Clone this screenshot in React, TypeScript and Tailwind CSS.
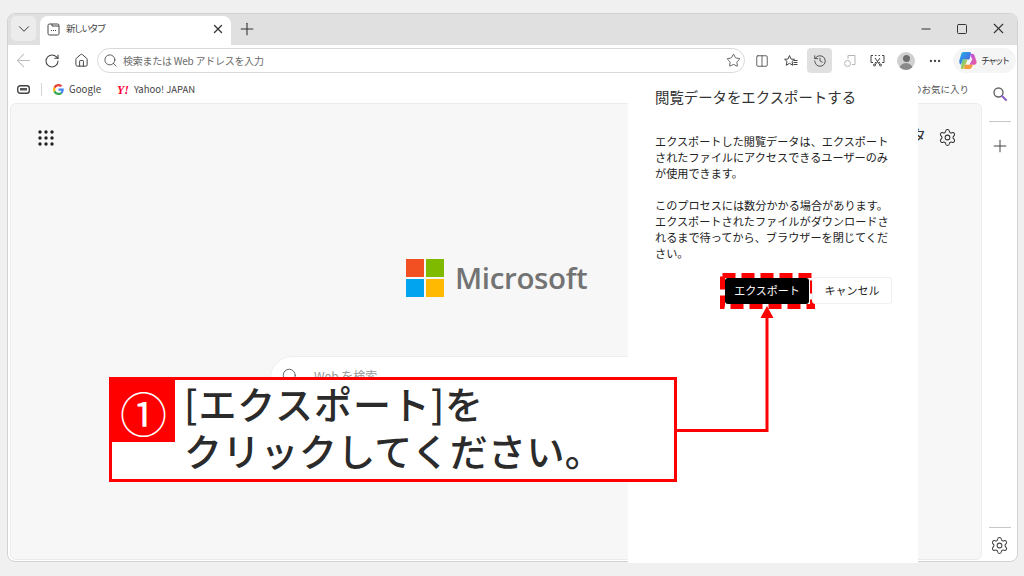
import React from "react";
import { ChevronDown, X, Plus, ArrowLeft, RotateCw, Home, Search, Star, Minus, Square, Columns2, History, MoreHorizontal, Settings } from "lucide-react";

const jp = "font-['Noto_Sans_CJK_JP','Noto_Sans',sans-serif]";

function Dots() {
  return (
    <svg width="16" height="16" viewBox="0 0 16 16" fill="#222">
      {[2, 8, 14].flatMap((y) => [2, 8, 14].map((x) => <circle key={`${x}-${y}`} cx={x} cy={y} r="1.7" />))}
    </svg>
  );
}

function GoogleG() {
  return (
    <svg width="11" height="11" viewBox="0 0 48 48">
      <path fill="#EA4335" d="M24 9.500c3.500 0 6.700 1.200 9.200 3.600l6.900-6.900C35.900 2.400 30.500 0 24 0 14.600 0 6.500 5.400 2.600 13.200l8 6.200C12.500 13.600 17.800 9.500 24 9.500z" />
      <path fill="#4285F4" d="M47 24.500c0-1.600-.1-3.100-.4-4.500H24v9h12.900c-.6 3-2.200 5.500-4.700 7.200l7.700 6C44.400 38 47 31.900 47 24.500z" />
      <path fill="#FBBC05" d="M10.600 28.600c-.5-1.400-.8-3-.8-4.600s.3-3.200.8-4.600l-8-6.200C.9 16.500 0 20.100 0 24s.9 7.500 2.600 10.800l8-6.200z" />
      <path fill="#34A853" d="M24 48c6.500 0 11.900-2.100 15.900-5.800l-7.700-6c-2.100 1.400-4.900 2.300-8.200 2.300-6.200 0-11.500-4.200-13.400-9.900l-8 6.200C6.500 42.600 14.600 48 24 48z" />
    </svg>
  );
}

function Copilot() {
  return (
    <svg width="19" height="19" viewBox="0 0 20 20" className="shrink-0">
      <defs>
        <linearGradient id="c1" x1="0" y1="0" x2="1" y2="1"><stop offset="0" stopColor="#1fb6e8" /><stop offset="1" stopColor="#5a4be0" /></linearGradient>
        <linearGradient id="c2" x1="0" y1="0" x2="1" y2="1"><stop offset="0" stopColor="#b45ae8" /><stop offset="1" stopColor="#f0589a" /></linearGradient>
        <linearGradient id="c3" x1="0" y1="0" x2="1" y2="1"><stop offset="0" stopColor="#4fd08a" /><stop offset="1" stopColor="#f5c13a" /></linearGradient>
      </defs>
      <path fill="url(#c1)" d="M6 1h6c1 0 1.500.6 1.800 1.500L12 9H5.500L3 14.500C1.500 13.500 1 12 1.400 10L3.500 3C3.900 1.800 4.800 1 6 1z" />
      <path fill="url(#c2)" d="M12.500 3.500 15 3c1.200 0 2 .8 2.400 1.800L19.500 11c.4 1.600-.5 3-2 3.500H12L15 9z" />
      <path fill="url(#c3)" d="M5 9h5l-3 8c-.4 1-1.200 2-2.500 2S3 18 3 16.500z" />
      <path fill="#f29a3c" d="M7.500 14.500H16L14 18c-.5.800-1.300 1-2 1H6.500z" />
    </svg>
  );
}

function MsLogo() {
  return (
    <div className="grid grid-cols-[18px_18px] grid-rows-[18px_18px] gap-[2px]">
      <div className="bg-[#f25022]" />
      <div className="bg-[#7fba00]" />
      <div className="bg-[#00a4ef]" />
      <div className="bg-[#ffb900]" />
    </div>
  );
}

export default function App() {
  return (
    <div className={`relative h-[576px] w-[1024px] overflow-hidden bg-[#f0f0f0] pl-[7px] pt-[13px] ${jp}`}>
      <div className="flex h-[549px] w-[1011px] flex-col overflow-hidden rounded-[8px] border border-[#d2d2d2] bg-white">
        {/* tab strip */}
        <div className="flex h-[31px] shrink-0 items-end bg-[#e0e0e0] pl-[3px]">
          <div className="mb-[4px] flex h-[25px] w-[25px] items-center justify-center rounded-[5px] bg-[#ececec]">
            <ChevronDown size={18} strokeWidth={1.3} color="#333" />
          </div>
          <div className="ml-[4px] flex h-[29px] w-[191px] items-center rounded-t-[8px] bg-white pb-[3px] pl-[7px] pr-[6px]">
            <svg width="13" height="13" viewBox="0 0 13 13" fill="none" stroke="#444" strokeWidth="1">
              <path d="M2.500 1h2.500v2h7v7.500a1.500 1.500 0 0 1-1.500 1.500h-8A1.500 1.500 0 0 1 1 10.500v-8A1.500 1.500 0 0 1 2.500 1z" />
              <path d="M5 1h5.500A1.500 1.500 0 0 1 12 2.500V3" />
              <path d="M4 7.500h1M6 7.500h1M8 7.500h1" strokeWidth="1.200" />
            </svg>
            <span className="ml-[6px] whitespace-nowrap text-[9.500px] leading-none tracking-[-1.800px] text-[#444]">新しいタブ</span>
            <X size={14} strokeWidth={2.2} color="#333" className="ml-auto" />
          </div>
          <div className="flex h-[29px] w-[32px] items-center justify-center pb-[3px]">
            <Plus size={20} strokeWidth={1.3} color="#333" />
          </div>
          <div className="ml-auto flex h-full items-center pb-[2px] pr-[1px]">
            <div className="flex w-[36px] justify-center"><Minus size={14} strokeWidth={1.8} color="#333" /></div>
            <div className="flex w-[36px] justify-center"><Square size={12} strokeWidth={2} color="#333" /></div>
            <div className="flex w-[36px] justify-center"><X size={17} strokeWidth={1.5} color="#333" /></div>
          </div>
        </div>

        {/* toolbar */}
        <div className="flex h-[31px] shrink-0 items-center">
          <div className="flex w-[30px] shrink-0 justify-center"><ArrowLeft size={21} strokeWidth={1.2} color="#bdbdbd" /></div>
          <div className="flex w-[28px] shrink-0 justify-center"><RotateCw size={16} strokeWidth={1.6} color="#444" /></div>
          <div className="flex w-[30px] shrink-0 justify-center"><Home size={15} strokeWidth={1.6} color="#444" /></div>
          <div className="ml-[1px] flex h-[25px] w-[648px] shrink-0 items-center rounded-full border border-[#d9d9d9] bg-white pl-[5px] pr-[3px]">
            <Search size={15} strokeWidth={1.5} color="#555" className="shrink-0" />
            <span className="ml-[5px] whitespace-nowrap text-[10px] tracking-[-0.250px] text-[#6b6b6b]">検索または Web アドレスを入力</span>
            <Star size={15} strokeWidth={1.3} color="#444" className="ml-auto" />
          </div>
          <Columns2 size={14} strokeWidth={1.4} color="#444" className="ml-[10px] shrink-0" />
          <svg width="14" height="14" viewBox="0 0 14 14" fill="none" stroke="#444" strokeWidth="1" className="ml-[15px] shrink-0">
            <path d="M5.500 1.500 7 5l3.500.3L8 7.500l.8 3.800-3.300-2-3.300 2 .8-3.800L.6 5.300 4 5z" />
            <path d="M10 6.500h3.500M9.500 8.500h4M9.500 10.500h4" />
          </svg>
          <div className="ml-[9px] flex h-[25px] w-[25px] shrink-0 items-center justify-center rounded-[4px] bg-[#e0e0e0]">
            <History size={14} strokeWidth={1.5} color="#444" />
          </div>
          <svg width="14" height="14" viewBox="0 0 14 14" fill="none" stroke="#b5b5b5" className="ml-[11px] shrink-0">
            <path d="M5 1.500h7v9H9M5 1.500V5" />
            <circle cx="4.500" cy="9.500" r="3" />
          </svg>
          <svg width="15" height="13" viewBox="0 0 15 13" fill="none" stroke="#444" className="ml-[13px] shrink-0">
            <path d="M3 1.500H1v7h2M12 1.500h2v7h-2M5 1.500h1.500M8.500 1.500H10M5 8.500h1M9 8.500h1" />
            <path d="M5 4l5 7M10 4l-5 7" />
            <circle cx="4.500" cy="11" r="1" />
            <circle cx="10.500" cy="11" r="1" />
          </svg>
          <div className="relative ml-[12px] h-[18px] w-[18px] shrink-0 overflow-hidden rounded-full bg-[#d0d0d0]">
            <div className="mx-auto mt-[3px] h-[7px] w-[7px] rounded-full bg-[#6e6e6e]" />
            <div className="mx-auto mt-[1px] h-[8px] w-[14px] rounded-t-full bg-[#8a8a8a]" />
          </div>
          <MoreHorizontal size={14} strokeWidth={2} color="#444" className="ml-[13px] shrink-0" />
          <div className="ml-[11px] flex h-[25px] w-[63px] shrink-0 items-center rounded-full bg-[#f5f5f5] pl-[5px]">
            <Copilot />
            <span className="ml-[4px] whitespace-nowrap text-[9px] tracking-[-2.200px] text-[#333]">チャット</span>
          </div>
        </div>

        {/* body */}
        <div className="flex min-h-0 flex-1">
          <div className="flex min-w-0 flex-1 flex-col">
            <div className="flex h-[27px] shrink-0 items-center pl-[9px]">
              <svg width="13" height="10" viewBox="0 0 13 10" fill="none">
                <rect x="0.700" y="0.700" width="11.600" height="7.600" rx="2.500" fill="#fff" stroke="#444" strokeWidth="1.400" />
                <rect x="3" y="3" width="7" height="2.500" fill="#555" />
              </svg>
              <div className="ml-[11px] h-[13px] w-px bg-[#d5d5d5]" />
              <div className="ml-[11px]"><GoogleG /></div>
              <span className="ml-[5px] text-[9.700px] text-[#444]">Google</span>
              <span className="ml-[16px] font-['Liberation_Serif',serif] text-[12px] font-bold italic leading-none text-[#ff0033]">Y!</span>
              <span className="ml-[5px] text-[9.500px] text-[#444]">Yahoo! JAPAN</span>
              <span className="ml-auto mr-[13px] text-[9.500px] text-[#555]">のお気に入り</span>
            </div>
            <div className="relative mb-[1px] ml-[2px] flex min-h-0 flex-1 flex-col rounded-[6px] border border-[#ebebeb] bg-[#f7f7f7]">
              <div className="flex items-center justify-between pl-[27px] pr-[24px] pt-[24px]">
                <Dots />
                <div className="flex items-center gap-[12px]">
                  <span className="-mt-[6px] text-[15px] leading-none text-[#333]">タ</span>
                  <Settings size={19} strokeWidth={1.3} color="#333" />
                </div>
              </div>
              <div className="ml-[395px] mt-[112px] flex items-center gap-[11px]">
                <MsLogo />
                <span className="font-['Open_Sans',sans-serif] text-[29.500px] font-semibold leading-none tracking-[-0.350px] text-[#737373]">Microsoft</span>
              </div>
              <div className="ml-[259px] mt-[59px] flex h-[44px] w-[500px] items-center rounded-full border border-[#eeeeee] bg-white pb-[4px] pl-[10px]">
                <Search size={18} strokeWidth={1.3} color="#666" />
                <span className="ml-[15px] text-[12px] text-[#999]">Web を検索</span>
              </div>
            </div>
          </div>
          <div className="flex w-[35px] shrink-0 flex-col items-center">
            <svg width="14" height="14" viewBox="0 0 14 14" fill="none" className="mt-[11px]">
              <circle cx="5.500" cy="5.500" r="4.500" stroke="#666" strokeWidth="1.400" />
              <path d="M9 9l4 4" stroke="#8a5cc4" strokeWidth="2" strokeLinecap="round" />
            </svg>
            <div className="mt-[20px] h-px w-[22px] bg-[#c8c8c8]" />
            <Plus size={20} strokeWidth={1.2} color="#444" className="mt-[14px]" />
            <div className="mt-auto h-px w-[22px] bg-[#c8c8c8]" />
            <Settings size={19} strokeWidth={1.3} color="#444" className="mb-[6px] mt-[8px]" />
          </div>
        </div>
      </div>

      {/* flyout panel */}
      <div className="absolute left-[628px] top-[76px] h-[487px] w-[290px] whitespace-nowrap bg-white pl-[27px] pr-[26px] pt-[11px]">
        <div className="text-[14.400px] leading-[20px] text-[#333]">閲覧データをエクスポートする</div>
        <div className="mt-[26px] text-[11.150px] leading-[16px] text-[#222]">
          エクスポートした閲覧データは、エクスポート<br />
          されたファイルにアクセスできるユーザーのみ<br />
          が使用できます。
        </div>
        <div className="mt-[16px] text-[11.150px] leading-[16px] text-[#222]">
          このプロセスには数分かかる場合があります。<br />
          エクスポートされたファイルがダウンロードさ<br />
          れるまで待ってから、ブラウザーを閉じてくだ<br />
          さい。
        </div>
      </div>

      {/* annotations */}
      <svg className="absolute left-[720px] top-[273px]" width="95" height="36" viewBox="0 0 95 36" fill="none">
        <rect x="2.500" y="2.500" width="90" height="31" stroke="#ff0000" strokeWidth="5" strokeDasharray="13 6" />
      </svg>
      <div className="absolute left-[725px] top-[277px] flex w-[167px] items-center gap-[3px]">
        <button className="flex h-[26px] w-[84px] items-center justify-center rounded-[3px] bg-black text-[11px] text-white">エクスポート</button>
        <button className="flex h-[27px] w-[80px] items-center justify-center rounded-[3px] border border-[#f0f0f0] bg-white text-[11px] text-[#222]">キャンセル</button>
      </div>
      <svg className="absolute left-[676px] top-[305px]" width="100" height="130" viewBox="0 0 100 130" fill="none">
        <path d="M0 125.500H91V8" stroke="#ff0000" strokeWidth="3" />
        <path d="M91 1l-6.500 12h13z" fill="#ff0000" />
      </svg>
      <div className="absolute left-[109px] top-[377px] h-[105px] w-[568px] border-[3px] border-[#ff0000] bg-white">
        <div className="flex">
          <div className="flex h-[62px] w-[63px] shrink-0 items-center justify-center bg-[#ff0000] text-[47px] leading-none text-white">①</div>
          <div className="-mt-[1px] ml-[9px] whitespace-nowrap text-[38px] font-medium leading-[47px] text-[#2b2b2b]">
            <span className="tracking-[0.900px]">[エクスポート]を</span><br />
            <span className="tracking-[0.300px]">クリックしてください。</span>
          </div>
        </div>
      </div>
    </div>
  );
}
